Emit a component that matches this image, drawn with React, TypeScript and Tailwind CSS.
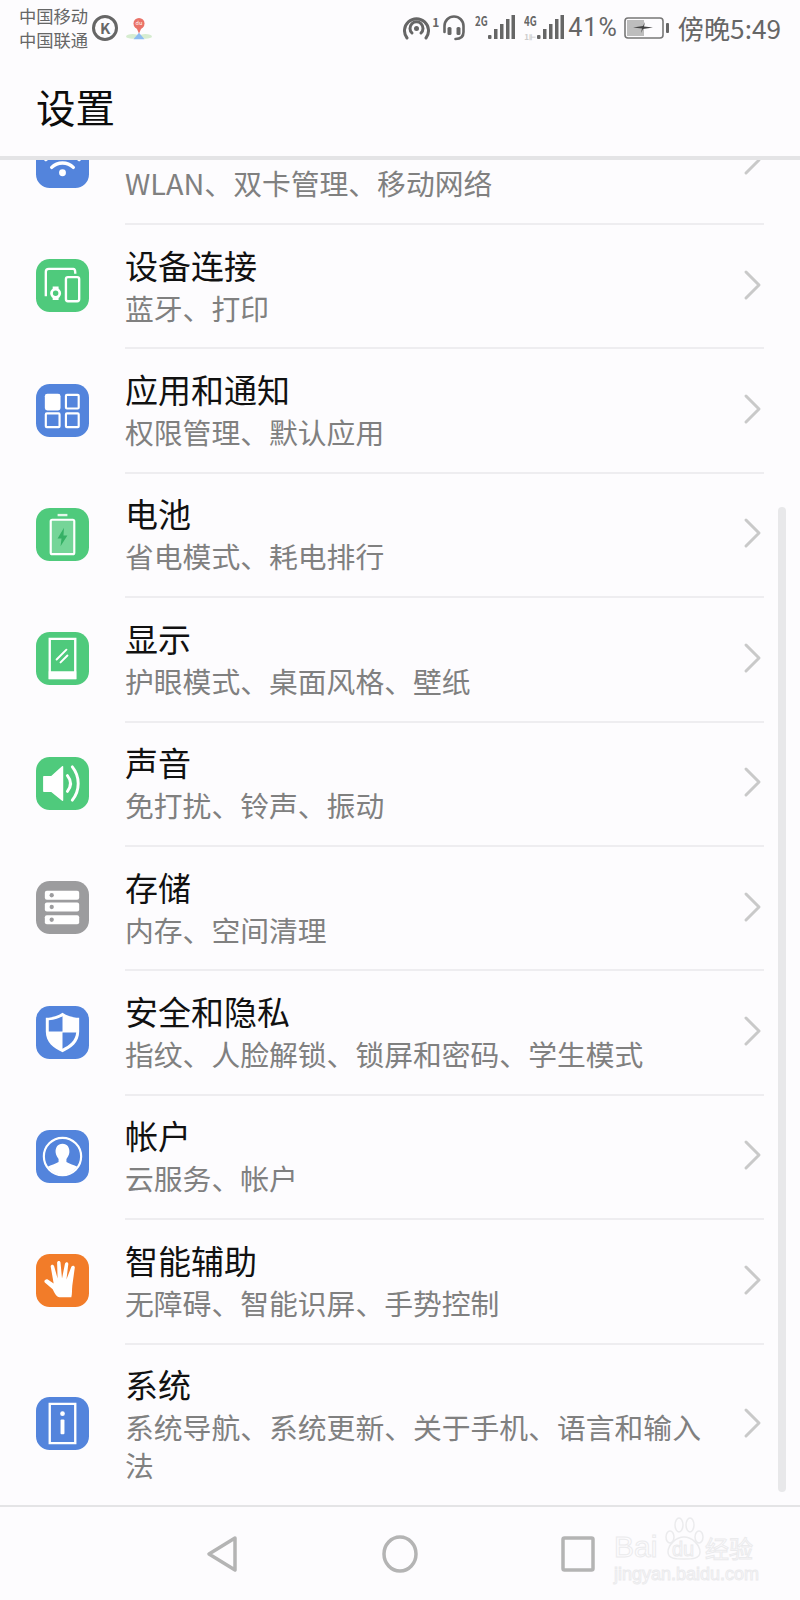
import type { ReactNode } from 'react';

const BLUE = '#5384dc';
const GREEN = '#4fca7c';
const GRAY = '#9c9c9e';
const ORANGE = '#f27c29';

function IconBox({ color, children }: { color: string; children: ReactNode }) {
  return (
    <svg width="53" height="53" viewBox="0 0 54 54" className="shrink-0">
      <rect width="54" height="54" rx="14" fill={color} />
      {children}
    </svg>
  );
}

const icons: Record<string, ReactNode> = {
  wifi: (
    <IconBox color={BLUE}>
      <path d="M16 33c6-6 16-6 22 0" stroke="#fff" strokeWidth="3.5" fill="none" strokeLinecap="round" />
      <circle cx="27" cy="38.500" r="3.500" fill="#fff" />
      <path d="M10 25c10-9 24-9 34 0" stroke="#fff" strokeWidth="3.5" fill="none" strokeLinecap="round" />
    </IconBox>
  ),
  device: (
    <IconBox color={GREEN}>
      <path d="M10 38V13q0-3 3-3h25q2 0 2 4v1" stroke="#fff" strokeWidth="2.4" fill="none" />
      <rect x="30.500" y="18.500" width="13.500" height="24.500" rx="2" stroke="#fff" strokeWidth="2.4" fill="none" />
      <circle cx="20" cy="35" r="4.200" stroke="#fff" strokeWidth="2.800" fill="none" />
      <path d="M17 29.500h6M17 40.500h6" stroke="#fff" strokeWidth="2.800" />
    </IconBox>
  ),
  apps: (
    <IconBox color={BLUE}>
      <rect x="9" y="10" width="16" height="17" rx="2.5" fill="#fff" />
      <rect x="30.500" y="11" width="13" height="14" rx="1" stroke="#fff" strokeWidth="2.2" fill="none" />
      <rect x="10" y="30" width="14" height="14" rx="1" stroke="#fff" strokeWidth="2.2" fill="none" />
      <rect x="30.500" y="30" width="13" height="14" rx="1" stroke="#fff" strokeWidth="2.2" fill="none" />
    </IconBox>
  ),
  battery: (
    <IconBox color={GREEN}>
      <rect x="22" y="6" width="10" height="2.4" fill="#fff" fillOpacity="0.85" />
      <rect x="15" y="12" width="24" height="35" rx="1.5" stroke="#fff" strokeWidth="2.2" fill="#fff" fillOpacity="0.22" />
      <path d="M28.500 20 22 31h4l-1 8 7-11h-4z" fill="#35b065" />
    </IconBox>
  ),
  display: (
    <IconBox color={GREEN}>
      <path d="M14 7h26v40H14z" stroke="#fff" strokeWidth="2.4" fill="none" />
      <rect x="13" y="40" width="28" height="8" fill="#fff" />
      <path d="M21 28l10-10M25 31l7-7" stroke="#fff" strokeWidth="2" strokeLinecap="round" />
    </IconBox>
  ),
  sound: (
    <IconBox color={GREEN}>
      <path d="M8 20h8l11-10v34L16 35H8z" fill="#fff" strokeLinejoin="round" stroke="#fff" strokeWidth="1.5" />
      <path d="M32 19c4 5 4 11 0 16" stroke="#fff" strokeWidth="3" fill="none" strokeLinecap="round" />
      <path d="M37 10c8 10 8 24 0 34" stroke="#fff" strokeWidth="3" fill="none" strokeLinecap="round" />
    </IconBox>
  ),
  storage: (
    <IconBox color={GRAY}>
      <rect x="9" y="10" width="35" height="9" rx="2" fill="#fff" />
      <rect x="9" y="22" width="35" height="9" rx="2" fill="#fff" />
      <rect x="9" y="35" width="35" height="9" rx="2" fill="#fff" />
      <circle cx="16" cy="14.500" r="2.200" fill={GRAY} />
      <circle cx="16" cy="26.500" r="2.200" fill={GRAY} />
      <circle cx="16" cy="39.500" r="2.200" fill={GRAY} />
    </IconBox>
  ),
  shield: (
    <IconBox color={BLUE}>
      <path d="M27 7c4 3 10 5 17 5v14c0 11-8 17-17 21-9-4-17-10-17-21V12c7 0 13-2 17-5z" fill="#fff" />
      <path d="M27 10.500c-3 2-8 3.500-14 4V26h14zM27 27v16.500c7-3.500 13-8 14-16.500z" fill={BLUE} />
    </IconBox>
  ),
  account: (
    <IconBox color={BLUE}>
      <circle cx="27" cy="27" r="19" stroke="#fff" strokeWidth="2.2" fill="none" />
      <path d="M27 14c5 0 7.500 4 7 9-.3 3-2 5-3 6.500v3c3 2 8 3 11 5-3 4.500-9 8-15 8s-12-3.500-15-8c3-2 8-3 11-5v-3c-1-1.500-2.700-3.500-3-6.500-.5-5 2-9 7-9z" fill="#fff" />
    </IconBox>
  ),
  hand: (
    <IconBox color={ORANGE}>
      <path d="M17 36 9 29c-1.500-1.500 1-4 3-3l6 4-3-17c-.4-2.500 3-3 3.500-.5L22 25l-.5-16c0-2.500 3.500-2.500 3.500 0l1.500 16 3-15c.5-2.500 3.800-2 3.400.5L31 26l5-13c1-2 4-1 3.500 1L37 32c-.5 5 0 8-1 12H24c-3 0-5-4-7-8z" fill="#fff" />
    </IconBox>
  ),
  system: (
    <IconBox color={BLUE}>
      <path d="M14 7h26v40H14z" stroke="#fff" strokeWidth="2.4" fill="none" />
      <circle cx="27" cy="17" r="2.4" fill="#fff" />
      <rect x="25" y="23" width="4" height="15" rx="1" fill="#fff" />
    </IconBox>
  ),
};

const rows = [
  { icon: 'wifi', title: '无线和网络', sub: 'WLAN、双卡管理、移动网络' },
  { icon: 'device', title: '设备连接', sub: '蓝牙、打印' },
  { icon: 'apps', title: '应用和通知', sub: '权限管理、默认应用' },
  { icon: 'battery', title: '电池', sub: '省电模式、耗电排行' },
  { icon: 'display', title: '显示', sub: '护眼模式、桌面风格、壁纸' },
  { icon: 'sound', title: '声音', sub: '免打扰、铃声、振动' },
  { icon: 'storage', title: '存储', sub: '内存、空间清理' },
  { icon: 'shield', title: '安全和隐私', sub: '指纹、人脸解锁、锁屏和密码、学生模式' },
  { icon: 'account', title: '帐户', sub: '云服务、帐户' },
  { icon: 'hand', title: '智能辅助', sub: '无障碍、智能识屏、手势控制' },
  { icon: 'system', title: '系统', sub: '系统导航、系统更新、关于手机、语言和输入法' },
];

function Signal() {
  return (
    <svg width="27" height="26" viewBox="0 0 27 26" className="shrink-0">
      <g fill="#666">
        <rect x="0" y="20" width="3.500" height="4" rx="1" />
        <rect x="6" y="14" width="3.500" height="10" />
        <rect x="12" y="9" width="3.500" height="15" />
        <rect x="18" y="4" width="3.500" height="20" />
        <rect x="23.500" y="0" width="3.500" height="24" />
      </g>
    </svg>
  );
}

function NetLabel({ text }: { text: string }) {
  return (
    <span className="-mt-[1px] inline-block w-[13px] origin-left scale-x-[0.75] text-[13px] leading-[13px] font-bold">{text}</span>
  );
}

function StatusBar() {
  return (
    <div className="flex h-[56px] items-center justify-between pr-[19px] pl-[19px] text-[#666]">
      <div className="flex items-center">
        <div className="flex flex-col text-[17.300px] leading-[24px]">
          <span>中国移动</span>
          <span>中国联通</span>
        </div>
        <div className="ml-[4px] flex h-[26px] w-[26px] items-center justify-center rounded-full border-[3px] border-[#666] text-[15px] font-bold">
          K
        </div>
        <svg width="26" height="24" viewBox="0 0 28 26" className="mt-[2px] ml-[8px]">
          <ellipse cx="7" cy="21" rx="7" ry="2.5" fill="#d6ecd0" />
          <ellipse cx="21" cy="21" rx="7" ry="2.5" fill="#d6ecd0" />
          <path d="M14 17l-6 7h12z" fill="#8cbcf0" />
          <circle cx="14" cy="7" r="6" fill="#ea7268" />
          <path d="M14 18l-3-7h6z" fill="#ea7268" />
          <text x="14" y="9" textAnchor="middle" fontSize="6" fill="#fff">du</text>
        </svg>
      </div>
      <div className="flex items-center">
        <svg width="27" height="26" viewBox="0 0 27 26" className="shrink-0">
          <path d="M4 23A12 12 0 1 1 23 23" stroke="#666" strokeWidth="3" fill="none" strokeLinecap="round" />
          <path d="M9 18a6.500 6.500 0 1 1 9 0" stroke="#666" strokeWidth="3" fill="none" strokeLinecap="round" />
          <circle cx="13.500" cy="13.500" r="2.500" fill="#666" />
        </svg>
        <span className="mb-[12px] ml-[2px] text-[12px] leading-[12px] font-bold">1</span>
        <svg width="24" height="26" viewBox="0 0 24 26" className="ml-[3px] shrink-0">
          <path d="M2.500 17V11a9.500 9.500 0 0 1 19 0v6c0 5-3 7-8 7" stroke="#666" strokeWidth="2.600" fill="none" strokeLinecap="round" />
          <rect x="5.500" y="12" width="4" height="8" rx="1.500" fill="#666" />
          <rect x="14.500" y="12" width="4" height="8" rx="1.500" fill="#666" />
        </svg>
        <div className="ml-[9px] flex items-start">
          <NetLabel text="2G" />
          <Signal />
        </div>
        <div className="relative ml-[9px] flex items-start">
          <NetLabel text="4G" />
          <span className="absolute top-[18px] left-0 text-[8px] leading-[8px] font-bold text-[#ccc]">1⊩</span>
          <Signal />
        </div>
        <span className="ml-[4px] font-['Roboto',sans-serif] text-[25px] leading-[30px] tracking-[1px]">41%</span>
        <svg width="46" height="24" viewBox="0 0 46 24" className="ml-[6px] shrink-0">
          <rect x="1" y="2" width="38" height="20" rx="3" stroke="#777" strokeWidth="1.600" fill="none" />
          <rect x="3" y="4" width="17" height="16" fill="#bdbdbd" />
          <path d="M9 11.500l10-1.500 2-4-1 4.500 9 1-10 1.500-2 4 1-4.500z" fill="#444" />
          <rect x="42" y="7" width="3" height="10" rx="1" fill="#666" />
        </svg>
        <span className="ml-[8px] text-[26.200px] leading-[30px]">傍晚5:49</span>
      </div>
    </div>
  );
}

function Row({ row, first, last }: { row: (typeof rows)[number]; first: boolean; last: boolean }) {
  return (
    <div className={`flex items-center ${first ? '-mt-[60px] h-[125px]' : last ? 'h-[160px]' : 'h-[124.400px]'}`}>
      <div className="flex w-[125px] shrink-0 pb-[3px] pl-[36px]">{icons[row.icon]}</div>
      <div className={`flex h-full flex-1 items-center justify-between ${last ? '' : 'border-b-2 border-[#eeedf0]'} mr-[36px]`}>
        <div className="w-[590px] pb-[2px]">
          <div className="mb-[3px] text-[33px] leading-[42px] text-[#111]">{row.title}</div>
          <div className="text-[28.800px] leading-[38px] text-[#808080]">{row.sub}</div>
        </div>
        <svg width="20" height="32" viewBox="0 0 20 32" className="mr-[1px] mb-[3px] shrink-0">
          <path d="M3 3l13 13L3 29" stroke="#c9c9c9" strokeWidth="3" fill="none" strokeLinecap="round" strokeLinejoin="round" />
        </svg>
      </div>
    </div>
  );
}

export default function App() {
  return (
    <div className="relative flex h-[1600px] w-[800px] flex-col overflow-hidden bg-[#fdfcfe] font-['Noto_Sans_CJK_SC','Roboto',sans-serif]">
      <div className="relative z-10 h-[160px] shrink-0 border-b-4 border-[#e4e4e6] bg-[#fdfcfe]">
        <StatusBar />
        <div className="mt-[24px] pl-[36px] text-[39.500px] leading-[52px] text-[#0c0c0c]">设置</div>
      </div>
      <div className="flex-1">
        {rows.map((row, i) => (
          <Row key={row.icon} row={row} first={i === 0} last={i === rows.length - 1} />
        ))}
      </div>
      {/* scrollbar */}
      <div className="absolute top-[507px] left-[778px] h-[985px] w-[8px] rounded-full bg-[#e8e8ea]" />
      <div className="flex h-[95px] shrink-0 items-center border-t-2 border-[#e4e4e6]">
        <svg width="32" height="38" viewBox="0 0 32 38" className="ml-[206px]">
          <path d="M29 3 3 19l26 16z" stroke="#b4b4b4" strokeWidth="3.500" fill="none" strokeLinejoin="round" />
        </svg>
        <svg width="36" height="38" viewBox="0 0 36 38" className="ml-[144px]">
          <ellipse cx="18" cy="19" rx="16" ry="17" stroke="#b4b4b4" strokeWidth="3.500" fill="none" />
        </svg>
        <svg width="34" height="36" viewBox="0 0 34 36" className="ml-[143px]">
          <rect x="2" y="2" width="30" height="32" rx="1.500" stroke="#b4b4b4" strokeWidth="3.500" fill="none" />
        </svg>
      </div>
      {/* watermark */}
      <div className="absolute top-[1512px] left-[612px] h-[80px] w-[146px] text-transparent [-webkit-text-stroke:1px_#ebebed]">
        <svg width="42" height="50" viewBox="0 0 40 50" className="absolute top-[3px] left-[51px]">
          <g stroke="#ebebed" strokeWidth="1.500" fill="none">
            <ellipse cx="6" cy="22" rx="4" ry="6" />
            <ellipse cx="15" cy="10" rx="4" ry="7" />
            <ellipse cx="26" cy="10" rx="4" ry="7" />
            <ellipse cx="35" cy="22" rx="4" ry="6" />
            <path d="M20 22c-8 0-16 8-16 15s8 7 16 7 16 0 16-7-8-15-16-15z" />
          </g>
        </svg>
        <span className="absolute top-[18px] left-[2px] font-['Liberation_Sans',sans-serif] text-[30px] leading-[34px]">Bai</span>
        <span className="absolute top-[27px] left-[60px] font-['Liberation_Sans',sans-serif] text-[20px] leading-[20px]">du</span>
        <span className="absolute top-[23px] left-[93px] text-[24px] leading-[26px] whitespace-nowrap">经验</span>
        <span className="absolute top-[53px] left-[2px] font-['Liberation_Sans',sans-serif] text-[18px] leading-[18px] whitespace-nowrap">jingyan.baidu.com</span>
      </div>
    </div>
  );
}
